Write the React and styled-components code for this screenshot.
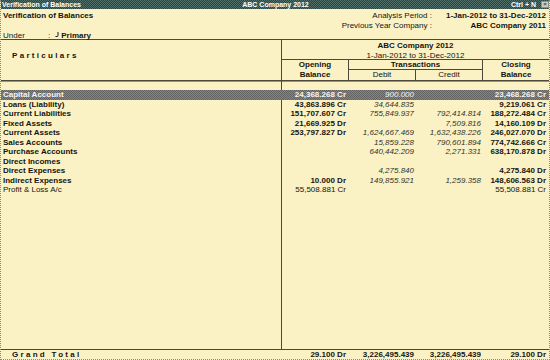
import styled, { createGlobalStyle } from 'styled-components';

const LINE = '#4e4838';

const GlobalStyle = createGlobalStyle`
  *, *::before, *::after { box-sizing: border-box; }
  html, body { margin: 0; padding: 0; background: #faf2c5; }
  body {
    font-family: "Liberation Sans", Arial, sans-serif;
    font-size: 8px;
    color: #16140f;
  }
`;

const Frame = styled.div`
  width: 550px;
  height: 360px;
  display: flex;
  flex-direction: column;
  background: #faf2c5;
  border-left: 1px dotted #8c8a70;
  border-right: 1px dotted #8c8a70;
  border-bottom: 1px dotted #8c8a70;
  overflow: hidden;
`;

const TitleBar = styled.div`
  height: 9px;
  display: grid;
  grid-template-columns: 1fr auto 1fr;
  align-items: center;
  margin: 0 -1px;
  padding: 0 1px 0 2px;
  background: repeating-conic-gradient(#284340 0 25%, #536f69 0 50%) 0 0 / 2px 2px;
  color: #fff;
  font-size: 7px;
  font-weight: bold;
  line-height: 9px;
`;

const TitleRight = styled.div`
  display: flex;
  justify-content: flex-end;
  align-items: center;
  gap: 5px;
`;

const CloseBox = styled.span`
  width: 8px;
  height: 7px;
  display: flex;
  align-items: center;
  justify-content: center;
  background: #c9cbc4;
  border: 1px solid #8c9089;
  color: #3b4440;
  font-size: 6px;
  line-height: 5px;
`;

const InfoBlock = styled.div`
  display: flex;
  justify-content: space-between;
  padding: 2px 3px 0 2px;
  line-height: 10px;
`;

const ReportTitle = styled.div`
  font-weight: bold;
`;

const Meta = styled.div`
  display: grid;
  grid-template-columns: auto auto;
  column-gap: 14px;
  text-align: right;
`;

const MetaValue = styled.span`
  font-weight: bold;
`;

const UnderRow = styled.div`
  display: flex;
  align-items: center;
  height: 9px;
  line-height: 9px;
  padding-left: 2px;
  border-bottom: 1px solid ${LINE};
`;

const UnderLabel = styled.span`
  width: 45px;
`;

const UnderValue = styled.span`
  font-weight: bold;
  margin-left: 2px;
`;

const Hook = styled.svg`
  margin-left: 5px;
  align-self: flex-start;
  margin-top: 1px;
`;

const Header = styled.div`
  display: grid;
  grid-template-columns: 281px 67px 67px 67px 1fr;
  grid-template-rows: 20px 9.5px 10.5px;
  border-bottom: 1px solid ${LINE};
  box-shadow: 0 1px 0 #9a927a;
  line-height: 9.5px;
`;

const Cell = styled.div`
  text-align: center;
  font-weight: ${(p) => (p.$bold ? 'bold' : 'normal')};
  border-right: ${(p) => (p.$noRight ? 'none' : `1px solid ${LINE}`)};
  border-bottom: ${(p) => (p.$under ? `1px solid ${LINE}` : 'none')};
`;

const Particulars = styled(Cell)`
  grid-row: 1 / span 3;
  text-align: left;
  padding: 11px 0 0 11px;
  letter-spacing: 2.3px;
  line-height: 10px;
`;

const Spaced = styled.span`
  letter-spacing: 2.3px;
  font-weight: bold;
`;

const Company = styled(Cell)`
  grid-column: 2 / span 4;
  padding-top: 1px;
`;

const Body = styled.div`
  flex: 1;
  padding-top: 9px;
  background: linear-gradient(${LINE}, ${LINE}) 280px 0 / 1px 100% no-repeat;
`;

const Row = styled.div`
  display: grid;
  grid-template-columns: 281px 67px 67px 67px 1fr;
  height: 9.5px;
  line-height: 9.5px;
  white-space: nowrap;
  color: ${(p) => (p.$active ? '#f4f4f0' : 'inherit')};
  background: ${(p) =>
    p.$active
      ? 'repeating-conic-gradient(#626262 0 25%, #858583 0 50%) 0 0 / 2px 2px'
      : 'transparent'};
`;

const Name = styled.div`
  padding-left: 2px;
  font-weight: ${(p) => (p.$plain ? 'normal' : 'bold')};
`;

const Amount = styled.div`
  text-align: right;
  padding-right: ${(p) => p.$pad || 2}px;
  font-weight: ${(p) => (p.$bold ? 'bold' : 'normal')};
  font-style: ${(p) => (p.$italic ? 'italic' : 'normal')};
  color: ${(p) => (p.$italic && !p.$active ? '#34312a' : 'inherit')};
`;

const TotalRow = styled(Row)`
  height: 10px;
  line-height: 9px;
  border-top: 1px solid ${LINE};
`;

const rows = [
  { name: 'Capital Account', open: '24,368.268 Cr', debit: '900.000', credit: '', close: '23,468.268 Cr', active: true },
  { name: 'Loans (Liability)', open: '43,863.896 Cr', debit: '34,644.835', credit: '', close: '9,219.061 Cr' },
  { name: 'Current Liabilities', open: '151,707.607 Cr', debit: '755,849.937', credit: '792,414.814', close: '188,272.484 Cr' },
  { name: 'Fixed Assets', open: '21,669.925 Dr', debit: '', credit: '7,509.816', close: '14,160.109 Dr' },
  { name: 'Current Assets', open: '253,797.827 Dr', debit: '1,624,667.469', credit: '1,632,438.226', close: '246,027.070 Dr' },
  { name: 'Sales Accounts', open: '', debit: '15,859.228', credit: '790,601.894', close: '774,742.666 Cr' },
  { name: 'Purchase Accounts', open: '', debit: '640,442.209', credit: '2,271.331', close: '638,170.878 Dr' },
  { name: 'Direct Incomes', open: '', debit: '', credit: '', close: '' },
  { name: 'Direct Expenses', open: '', debit: '4,275.840', credit: '', close: '4,275.840 Dr' },
  { name: 'Indirect Expenses', open: '10.000 Dr', debit: '149,855.921', credit: '1,259.358', close: '148,606.563 Dr' },
  { name: 'Profit & Loss A/c', open: '55,508.881 Cr', debit: '', credit: '', close: '55,508.881 Cr', plain: true },
];

export default function App() {
  return (
    <>
      <GlobalStyle />
      <Frame>
        <TitleBar>
          <span>Verification of Balances</span>
          <span>ABC Company 2012</span>
          <TitleRight>
            <span>Ctrl + N</span>
            <CloseBox>×</CloseBox>
          </TitleRight>
        </TitleBar>

        <InfoBlock>
          <ReportTitle>Verification of Balances</ReportTitle>
          <Meta>
            <span>Analysis Period :</span>
            <MetaValue>1-Jan-2012 to 31-Dec-2012</MetaValue>
            <span>Previous Year Company :</span>
            <MetaValue>ABC Company 2011</MetaValue>
          </Meta>
        </InfoBlock>
        <UnderRow>
          <UnderLabel>Under</UnderLabel>
          <span>:</span>
          <Hook width="4" height="5" viewBox="0 0 4 5">
            <path d="M3 0 V3.5 Q3 4.5 2 4.5 H0.5" fill="none" stroke="#1c1a14" strokeWidth="1" />
          </Hook>
          <UnderValue>Primary</UnderValue>
        </UnderRow>

        <Header>
          <Particulars $bold>Particulars</Particulars>
          <Company $noRight $under>
            <b>ABC Company 2012</b>
            <div>1-Jan-2012 to 31-Dec-2012</div>
          </Company>
          <Cell $bold style={{ gridRow: '2 / span 2' }}>
            Opening
            <br />
            Balance
          </Cell>
          <Cell $bold $under style={{ gridColumn: '3 / span 2' }}>
            Transactions
          </Cell>
          <Cell $noRight $bold style={{ gridColumn: 5, gridRow: '2 / span 2' }}>
            Closing
            <br />
            Balance
          </Cell>
          <Cell style={{ gridColumn: 3, gridRow: 3 }}>Debit</Cell>
          <Cell style={{ gridColumn: 4, gridRow: 3 }}>Credit</Cell>
        </Header>

        <Body>
          {rows.map((r) => (
            <Row key={r.name} $active={r.active}>
              <Name $plain={r.plain}>{r.name}</Name>
              <Amount $bold={!r.plain} $pad={3}>{r.open}</Amount>
              <Amount $italic $active={r.active}>{r.debit}</Amount>
              <Amount $italic $active={r.active}>{r.credit}</Amount>
              <Amount $bold={!r.plain} $pad={3}>{r.close}</Amount>
            </Row>
          ))}
        </Body>

        <TotalRow>
          <Name style={{ paddingLeft: 11 }}>
            <Spaced>Grand Total</Spaced>
          </Name>
          <Amount $bold $pad={3}>29.100 Dr</Amount>
          <Amount $bold>3,226,495.439</Amount>
          <Amount $bold>3,226,495.439</Amount>
          <Amount $bold $pad={3}>29.100 Dr</Amount>
        </TotalRow>
      </Frame>
    </>
  );
}
